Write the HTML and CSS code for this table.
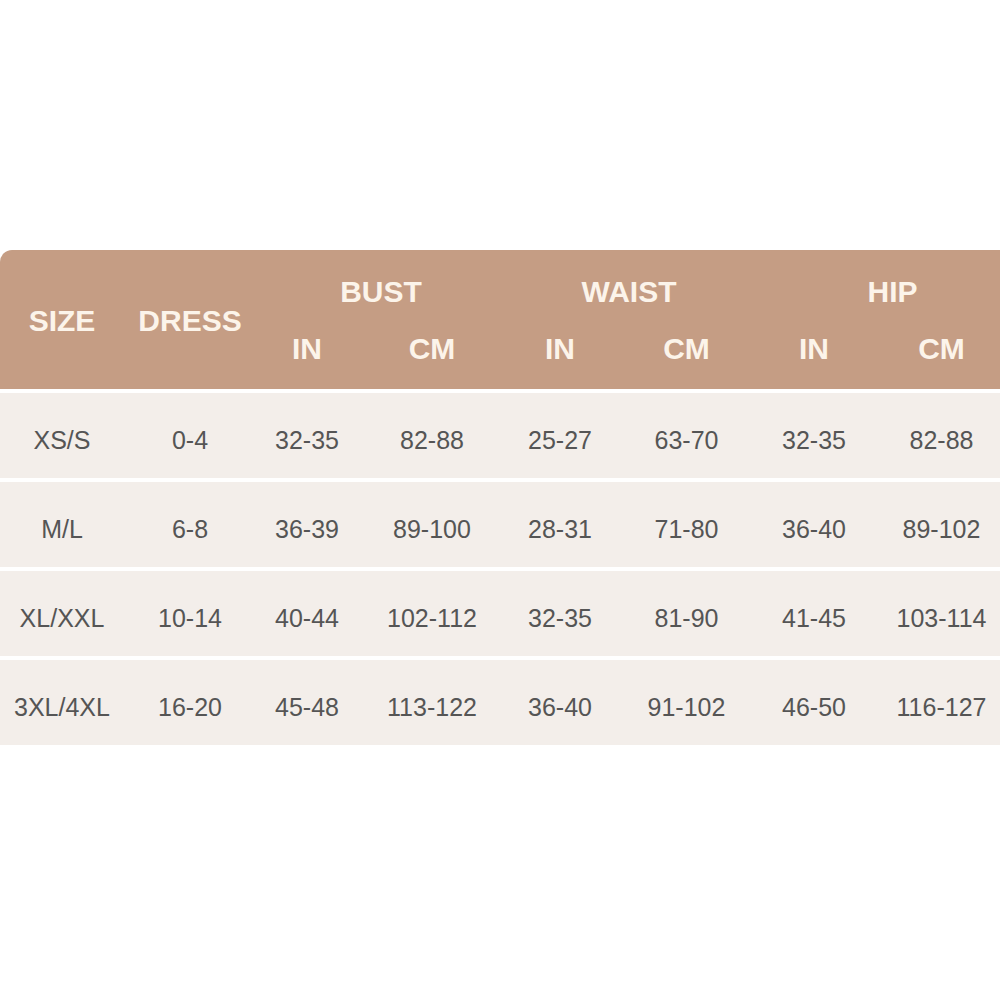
FILE: index.html
```html
<!DOCTYPE html>
<html>
<head>
<meta charset="utf-8">
<link rel="stylesheet" href="styles.css">
</head>
<body>
<div class="page">
  <div class="chart">
    <div class="head">
      <div class="hcell tall">SIZE</div>
      <div class="hcell tall">DRESS</div>
      <div class="hcell group">BUST</div>
      <div class="hcell group waist">WAIST</div>
      <div class="hcell group hip">HIP</div>
      <div class="hcell">IN</div>
      <div class="hcell">CM</div>
      <div class="hcell">IN</div>
      <div class="hcell">CM</div>
      <div class="hcell">IN</div>
      <div class="hcell">CM</div>
    </div>
    <div class="rows">
      <div class="row">
        <div class="cell">XS/S</div><div class="cell">0-4</div><div class="cell">32-35</div><div class="cell">82-88</div><div class="cell">25-27</div><div class="cell">63-70</div><div class="cell">32-35</div><div class="cell">82-88</div>
      </div>
      <div class="row">
        <div class="cell">M/L</div><div class="cell">6-8</div><div class="cell">36-39</div><div class="cell">89-100</div><div class="cell">28-31</div><div class="cell">71-80</div><div class="cell">36-40</div><div class="cell">89-102</div>
      </div>
      <div class="row">
        <div class="cell">XL/XXL</div><div class="cell">10-14</div><div class="cell">40-44</div><div class="cell">102-112</div><div class="cell">32-35</div><div class="cell">81-90</div><div class="cell">41-45</div><div class="cell">103-114</div>
      </div>
      <div class="row">
        <div class="cell">3XL/4XL</div><div class="cell">16-20</div><div class="cell">45-48</div><div class="cell">113-122</div><div class="cell">36-40</div><div class="cell">91-102</div><div class="cell">46-50</div><div class="cell">116-127</div>
      </div>
    </div>
  </div>
</div>
</body>
</html>
```

FILE: styles.css
```css
html, body {
  margin: 0;
  padding: 0;
  background: #ffffff;
  overflow: hidden;
}

.page {
  width: 1000px;
  height: 1000px;
  overflow: hidden;
  padding-top: 250px;
  box-sizing: border-box;
  font-family: "Liberation Sans", Arial, sans-serif;
}

.chart {
  width: 1014px;
}

.head {
  display: grid;
  grid-template-columns: 124px 132px 102px 148px 108px 145px 110px 145px;
  grid-template-rows: 36px 36px;
  row-gap: 21px;
  padding: 24px 0 22px;
  background: #c59d84;
  border-radius: 12px 0 0 0;
  color: #fcf4ea;
  font-weight: bold;
  font-size: 30px;
}

.hcell {
  display: flex;
  align-items: center;
  justify-content: center;
  white-space: nowrap;
}

.hcell.tall {
  grid-row: 1 / span 2;
}

.hcell.group {
  grid-column: span 2;
}

.hcell.waist {
  padding-right: 7px;
}

.hcell.hip {
  padding-left: 12px;
}

.rows {
  display: flex;
  flex-direction: column;
  gap: 4px;
  padding-top: 4px;
}

.row {
  display: grid;
  grid-template-columns: 124px 132px 102px 148px 108px 145px 110px 145px;
  height: 85px;
  background: #f3eeea;
  color: #555555;
  font-size: 25px;
}

.cell {
  display: flex;
  align-items: center;
  justify-content: center;
  padding-top: 10px;
  white-space: nowrap;
}
```
